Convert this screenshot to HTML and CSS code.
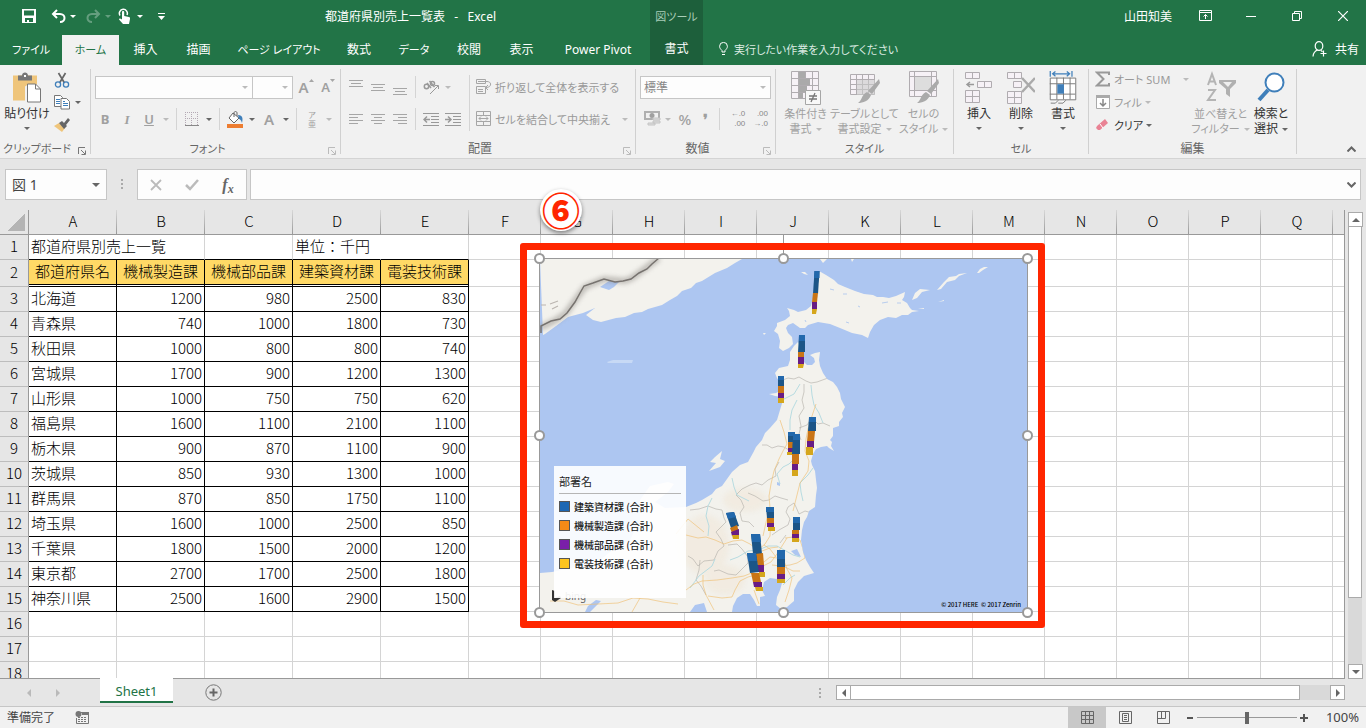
FILE: index.html
```html
<!DOCTYPE html>
<html lang="ja">
<head>
<meta charset="utf-8">
<title>都道府県別売上一覧表 - Excel</title>
<link rel="stylesheet" href="styles.css">
</head>
<body>
<header class="top">
  <div class="titlebar">
    <div class="quick">
      <button class="q" aria-label="上書き保存"><svg width="14" height="14" viewBox="0 0 14 14"><path fill="#fff" fill-rule="evenodd" d="M0 0h14v14H0zM2 1.500v5h10v-5zM3 9v4h2v-2h2v2h4V9z"/></svg></button>
      <button class="q undo" aria-label="元に戻す"><svg width="15" height="14" viewBox="0 0 15 14"><path fill="none" stroke="#fff" stroke-width="2" d="M6 1L2 5l4 4M2 5h7c6 0 6 8 0 8"/></svg></button>
      <span class="caret light"></span>
      <button class="q redo faded" aria-label="やり直し"><svg width="15" height="14" viewBox="0 0 15 14"><path fill="none" stroke="#fff" stroke-width="2" d="M9 1l4 4-4 4M13 5H6c-6 0-6 8 0 8"/></svg></button>
      <span class="caret light faded"></span>
      <button class="q touch" aria-label="タッチ/マウス モードの切り替え"><svg width="13" height="17" viewBox="0 0 13 17"><path fill="none" stroke="#fff" stroke-width="1.500" d="M2 7.500A4 4 0 1 1 9 7"/><path fill="#fff" d="M4 4c0-1.300 2.200-1.300 2.200 0v4l4.800 1c1 .3 1.200 1 1 2l-1 5H5L1 11.500c0-1 1-1.500 3 0z"/></svg></button>
      <span class="caret light"></span>
      <button class="q custom" aria-label="クイック アクセス ツール バーのユーザー設定"><svg width="7" height="7" viewBox="0 0 7 7"><path fill="#fff" d="M0 0h7v1H0zM0 3h7L3.500 7z"/></svg></button>
    </div>
    <h1>都道府県別売上一覧表&nbsp;&nbsp; -&nbsp;&nbsp; Excel</h1>
  </div>
  <nav class="tabs">
    <button class="kana">ファイル</button><button class="active kana">ホーム</button><button>挿入</button><button>描画</button><button class="kana">ページ レイアウト</button><button>数式</button><button class="kana">データ</button><button>校閲</button><button>表示</button><button>Power Pivot</button>
  </nav>
  <div class="context"><span class="kana">図ツール</span><button>書式</button></div>
  <div class="account">
    <span class="user">山田知美</span>
    <button class="win" aria-label="リボンの表示オプション"><svg width="13" height="12" viewBox="0 0 13 12"><path fill="none" stroke="#fff" d="M.5.5h12v10H.5zM.5 2.500h12M6.500 9V4.500M4.500 6.500l2-2 2 2"/></svg></button>
    <button class="win" aria-label="最小化"><svg width="10" height="10" viewBox="0 0 10 10"><path stroke="#fff" d="M0 5.500h10"/></svg></button>
    <button class="win" aria-label="元に戻す (縮小)"><svg width="10" height="10" viewBox="0 0 10 10"><path fill="none" stroke="#fff" d="M.5 2.500h7v7h-7zM2.500 2V.5h7v7H8"/></svg></button>
    <button class="win" aria-label="閉じる"><svg width="10" height="10" viewBox="0 0 10 10"><path stroke="#fff" stroke-width="1.200" d="M0 0l10 10M10 0L0 10"/></svg></button>
  </div>
  <div class="ask">
    <label><svg width="9" height="14" viewBox="0 0 9 14"><path fill="none" stroke="#fff" d="M3 10V8.500C1.500 7 .6 6 .6 4.300a3.900 3.900 0 0 1 7.800 0C8.400 6 7.500 7 6 8.500V10zM3 12.500h3"/></svg><input class="kana" aria-label="操作アシスト" placeholder="実行したい作業を入力してください"></label>
    <button class="share"><svg width="15" height="16" viewBox="0 0 15 16"><g fill="none" stroke="#fff" stroke-width="1.200"><ellipse cx="7" cy="5" rx="3.800" ry="4.400"/><path d="M1 15.500c.3-4 2-5.500 4.500-6.500M9 9.500l1.500 1.200M11.500 9.500v6M8.500 12.500h6"/></g></svg>共有</button>
  </div>
</header>

<section class="ribbon">
  <div class="group clip">
    <div class="body">
      <button class="big paste"><svg width="28" height="31" viewBox="0 0 28 31"><path fill="#efc57b" d="M0 3h24v9h-9l-3 2v14H0z"/><path fill="#777" d="M5 3h4c0-4 6-4 6 0h4v5H5z"/><path fill="#fff" d="M11 2.500h2v2h-2z"/><path fill="#fff" stroke="#777" d="M14.500 11.500h8l5 5v13h-13z"/><path fill="none" stroke="#777" d="M22.500 11.500v5h5"/></svg><span>貼り付け</span><i class="caret"></i></button>
      <div class="mini">
        <button class="cut" aria-label="切り取り"><svg width="16" height="16" viewBox="0 0 16 16"><path stroke="#666" stroke-width="1.700" d="M4.500 1l6 10M11.500 1l-6 10"/><g fill="none" stroke="#3f7fba" stroke-width="1.300"><circle cx="4" cy="12.500" r="2.600"/><circle cx="12" cy="12.500" r="2.600"/></g></svg></button>
        <button class="copy" aria-label="コピー"><svg width="16" height="15" viewBox="0 0 16 15"><g fill="#fff" stroke="#777"><path d="M.5.5h6l2 2v9h-8z"/><path d="M7 3.500h5.500l3 3v7.500H7z"/></g><path stroke="#3f7fba" d="M2 4.500h4M2 6.500h4M2 8.500h4M9 8.500h5M9 10.500h5M9 6.500h2"/></svg></button><i class="caret"></i>
        <button class="brush" aria-label="書式のコピー/貼り付け"><svg width="16" height="14" viewBox="0 0 16 14"><path fill="#efc57b" d="M0 8l5-3 6 5-3 4z"/><path fill="#666" d="M5 5l3-2 2 2 4-5 2 2-4 5 1 1-3 3z"/></svg></button>
      </div>
    </div>
    <footer class="kana"><span>クリップボード</span><svg class="launch on" width="8" height="8" viewBox="0 0 8 8"><path d="M.5 7V.5H7M3 3l4 4M7.500 3.500v4h-4"/></svg></footer>
  </div>

  <div class="group font">
    <div class="body rows">
      <div class="row">
        <span class="combo face"><select aria-label="フォント"><option></option></select></span><span class="combo size"><select aria-label="フォント サイズ"><option></option></select></span>
        <button class="grow b22">A<svg width="5" height="3" viewBox="0 0 5 3"><path fill="#a6a6a6" d="M0 3L2.500 0 5 3z"/></svg></button><button class="shrink b22">A<svg width="5" height="3" viewBox="0 0 5 3"><path fill="#a6a6a6" d="M0 0h5L2.500 3z"/></svg></button>
      </div>
      <div class="row">
        <button class="b22"><b>B</b></button><button class="b22"><em>I</em></button><button class="b22"><u>U</u></button><span class="c12"><i class="caret dim"></i></span><span class="bar"></span>
        <button class="b22" aria-label="罫線"><svg width="14" height="14" viewBox="0 0 14 14"><path fill="none" stroke="#b4a9b4" stroke-dasharray="1 1" d="M.5 0v13M6.500 0v13M12.500 0v13M0 .5h13M0 6.500h13"/><path stroke="#888" d="M0 13.500h14"/></svg></button><span class="c12"><i class="caret"></i></span><span class="bar"></span>
        <button class="b22" aria-label="塗りつぶしの色"><svg width="17" height="17" viewBox="0 0 17 17"><path fill="#fff" stroke="#666" d="M6 2l6 5-5 5-5-5z"/><path fill="none" stroke="#666" d="M7 6V2c0-2 3-2 3 0v3"/><path fill="#3f7fba" d="M11 4c5 0 5 4 4 8-1-3-2-4-3-4z"/><path fill="#ed7d31" d="M0 13h16v4H0z"/></svg></button><span class="c12"><i class="caret"></i></span>
        <button class="b22"><strong>A</strong></button><span class="c12"><i class="caret"></i></span><span class="bar"></span>
        <button class="b22 ruby"><span>ア</span><span>亜</span></button><span class="c12"><i class="caret dim"></i></span>
      </div>
    </div>
    <footer class="kana"><span>フォント</span><svg class="launch" width="8" height="8" viewBox="0 0 8 8"><path d="M.5 7V.5H7M3 3l4 4M7.500 3.500v4h-4"/></svg></footer>
  </div>

  <div class="group align">
    <div class="body">
      <div class="rows">
        <div class="row">
          <button class="b22" aria-label="上揃え"><svg width="14" height="20" viewBox="0 0 14 20"><path stroke="#a6a6a6" d="M0 3.500h14M2 6.500h10M0 9.500h14"/></svg></button><button class="b22" aria-label="上下中央揃え"><svg width="14" height="20" viewBox="0 0 14 20"><path stroke="#a6a6a6" d="M0 7.500h14M2 10.500h10M0 13.500h14"/></svg></button><button class="b22" aria-label="下揃え"><svg width="14" height="20" viewBox="0 0 14 20"><path stroke="#a6a6a6" d="M0 11.500h14M2 14.500h10M0 17.500h14"/></svg></button><span class="bar"></span>
          <button class="b22" aria-label="方向"><svg width="17" height="15" viewBox="0 0 17 15"><g fill="none" stroke="#999" stroke-width="1.500"><circle cx="3.500" cy="6.500" r="2.200"/><path d="M4 3l4 5M6.500 1l5 6"/><circle cx="9.500" cy="3.500" r="2"/></g><path fill="none" stroke="#999" d="M7 14l8-8M12 5.500h3.500V9"/></svg></button><span class="c12"><i class="caret dim"></i></span>
        </div>
        <div class="row">
          <button class="b22" aria-label="左揃え"><svg width="14" height="13" viewBox="0 0 14 13"><path stroke="#a6a6a6" d="M0 1.500h14M0 4.500h9M0 7.500h14M0 10.500h9"/></svg></button><button class="b22" aria-label="中央揃え"><svg width="14" height="13" viewBox="0 0 14 13"><path stroke="#a6a6a6" d="M0 1.500h14M3 4.500h8M0 7.500h14M3 10.500h8"/></svg></button><button class="b22" aria-label="右揃え"><svg width="14" height="13" viewBox="0 0 14 13"><path stroke="#a6a6a6" d="M0 1.500h14M5 4.500h9M0 7.500h14M5 10.500h9"/></svg></button><span class="bar"></span>
          <button class="b22" aria-label="インデントを減らす"><svg width="16" height="13" viewBox="0 0 16 13"><path stroke="#999" d="M0 .5h16M8 3.500h8M8 6.500h8M8 9.500h8M0 12.500h16"/><path fill="none" stroke="#999" stroke-width="1.500" d="M7 6.500H1M4 3.500l-3 3 3 3"/></svg></button><button class="b22" aria-label="インデントを増やす"><svg width="16" height="13" viewBox="0 0 16 13"><path stroke="#999" d="M0 .5h16M8 3.500h8M8 6.500h8M8 9.500h8M0 12.500h16"/><path fill="none" stroke="#999" stroke-width="1.500" d="M0 6.500h6M3 3.500l3 3-3 3"/></svg></button>
        </div>
      </div>
      <span class="bar tall"></span>
      <div class="rows wide">
        <div class="row"><button class="text kana"><svg width="16" height="16" viewBox="0 0 16 16"><path fill="none" stroke="#a6a6a6" d="M.5.500h9v4h-9zM.5 7.500h9v7h-9zM2 10.500h5M2 12.500h5M2 2.500h9c5 0 5 6-1 6M12 6l-2.500 2.500L12 11"/></svg>折り返して全体を表示する</button></div>
        <div class="row"><button class="text kana"><svg width="16" height="16" viewBox="0 0 16 16"><path fill="none" stroke="#a6a6a6" d="M.5.500h14v14H.5zM.5 4.500h14M.5 10.500h14M7.500.500v4M7.500 10.500v4M3 7.500h9M5 5.500l-2 2 2 2M10 5.500l2 2-2 2"/></svg>セルを結合して中央揃え</button><i class="caret dim end"></i></div>
      </div>
    </div>
    <footer><span>配置</span><svg class="launch" width="8" height="8" viewBox="0 0 8 8"><path d="M.5 7V.5H7M3 3l4 4M7.500 3.500v4h-4"/></svg></footer>
  </div>

  <div class="group number">
    <div class="body rows">
      <div class="row"><span class="combo fill"><select aria-label="表示形式"><option>標準</option></select></span></div>
      <div class="row">
        <button class="b24" aria-label="通貨表示形式"><svg width="17" height="16" viewBox="0 0 17 16"><path fill="#b0b0b0" fill-rule="evenodd" d="M0 0h16v9H0zM2 2v5h12V2z"/><circle cx="8" cy="4.500" r="2.500" fill="#a0a0a0"/><path fill="#ddd" stroke="#c4c4c4" d="M9 7h7v2H9zM9 10h7v2H9zM4 12h7v2H4z"/></svg></button><span class="c8"><i class="caret dim"></i></span><button class="b26 pct">%</button><button class="comma">❜</button><span class="bar"></span>
        <button class="dec" aria-label="小数点以下の表示桁数を増やす"><span>←.0</span><span>.00</span></button><button class="dec" aria-label="小数点以下の表示桁数を減らす"><span>.00</span><span>→.0</span></button>
      </div>
    </div>
    <footer><span>数値</span><svg class="launch" width="8" height="8" viewBox="0 0 8 8"><path d="M.5 7V.5H7M3 3l4 4M7.500 3.500v4h-4"/></svg></footer>
  </div>

  <div class="group styles">
    <div class="body">
      <button class="big off kana"><svg width="30" height="34" viewBox="0 0 30 34"><path fill="#f6f1f6" stroke="#b0acb0" d="M.5.500h27v27H.5zM7.500 0v28M14.500 0v28M21.500 0v28M0 7.500h28M0 14.500h28M0 21.500h28"/><path fill="#aaa" d="M8 1h6v6H8zM8 8h11v6H8zM8 15h8v6H8zM8 22h4v5H8z"/><path fill="#f8f8f8" stroke="#a6a6a6" d="M14.500 19.500h15v14h-15z"/><path stroke="#777" stroke-width="1.300" d="M18 25h8M18 28h8M24 22l-4 9"/></svg><span>条件付き<br>書式<i class="caret dim"></i></span></button>
      <button class="big off kana"><svg width="30" height="34" viewBox="0 0 30 34"><path fill="#f6f1f6" stroke="#b0acb0" d="M.5 3.500h24v20H.5zM6.500 3v20M12.500 3v20M18.500 3v20M0 8.500h24M0 13.500h24M0 18.500h24"/><path fill="#ccc" opacity=".6" d="M7 9h18v15H7z"/><path fill="#aaa" d="M29 8l1 4-8 11-4-3zM17 21l4 3c-2 6-8 8-13 8 4-2 3-8 9-11z"/></svg><span>テーブルとして<br>書式設定<i class="caret dim"></i></span></button>
      <button class="big off kana"><svg width="30" height="34" viewBox="0 0 30 34"><path fill="#f6f1f6" stroke="#b0acb0" d="M.5.500h27v25H.5zM5.500 0v25M22.500 0v25M0 5.500h28M0 19.500h28"/><path fill="#ddd" d="M6 6h16v13H6z"/><path fill="#aaa" d="M29 8l1 4-8 11-4-3zM17 21l4 3c-2 6-8 8-13 8 4-2 3-8 9-11z"/></svg><span>セルの<br>スタイル<i class="caret dim"></i></span></button>
    </div>
    <footer class="kana"><span>スタイル</span></footer>
  </div>

  <div class="group cellsg">
    <div class="body">
      <button class="big"><svg width="28" height="34" viewBox="0 0 28 34"><path fill="#f6f1f6" stroke="#b0acb0" d="M.5 1.500h14v6H.5zM7.500 1v6M.5 19.500h14v12H.5zM7.500 19v12M0 25.500h15M12.500 10.500h14v6h-14zM19.500 10v6"/><path fill="none" stroke="#999" stroke-width="1.500" d="M9 13.500H2M5 11l-3 2.500L5 16"/></svg><span>挿入</span><i class="caret"></i></button>
      <button class="big"><svg width="28" height="34" viewBox="0 0 28 34"><path fill="#f6f1f6" stroke="#b0acb0" d="M.5 1.500h14v6H.5zM7.500 1v6M.5 20.500h14v12H.5zM7.500 20v12M0 26.500h15M6.500 10.500h8v6h-8z"/><path fill="none" stroke="#aaa" stroke-width="2.500" d="M15 7l13 14M28 7L15 21"/></svg><span>削除</span><i class="caret"></i></button>
      <button class="big"><svg width="28" height="36" viewBox="0 0 28 36"><path fill="none" stroke="#3f7fba" stroke-width="1.300" d="M.5 0v6M23.500 0v6M3 3h18M6 .5L3 3l3 2.500M18 .5L21 3l-3 2.500"/><path fill="#fff" stroke="#777" d="M.5 7.500h27v23H.5zM7.500 7v23M14.500 7v23M21.500 7v23M0 13.500h27M0 24.500h27M1 34h5l3-3M9 34h5l3-3"/><path fill="#3f7fba" d="M8 14h7v10H8z"/></svg><span>書式</span><i class="caret"></i></button>
    </div>
    <footer class="kana"><span>セル</span></footer>
  </div>

  <div class="group edit">
    <div class="body">
      <div class="list">
        <button class="text kana"><svg width="16" height="16" viewBox="0 0 16 16"><path fill="none" stroke="#999" stroke-width="2" d="M14 4V1.500H2L8.500 8 2 14.500h12V12"/></svg>オート SUM<i class="caret dim far"></i></button>
        <button class="text kana"><svg width="16" height="16" viewBox="0 0 16 16"><path fill="#fff" stroke="#aaa" d="M1.500 1.500h13v13h-13z"/><path fill="#aaa" d="M1 1h14v3H1z"/><path fill="none" stroke="#888" stroke-width="1.500" d="M8 5v7M5 9l3 3 3-3"/></svg>フィル<i class="caret dim"></i></button>
        <button class="text kana on"><svg width="16" height="16" viewBox="0 0 16 16"><path fill="#e98294" d="M2 9l8-7 3 4-8 7H3l-2-2z"/><path stroke="#fff" d="M5 7l3 4"/></svg>クリア<i class="caret"></i></button>
      </div>
      <button class="big off kana sort"><svg width="30" height="34" viewBox="0 0 30 34"><g fill="none" stroke="#b4b4b4" stroke-width="2"><path d="M2 14L6 3l4 11M3 10.500h6M2 19h7L2 29h8"/></g><path fill="#b0b0b0" d="M13 9h17v3l-6 6v8l-4-3v-5l-7-6z"/><path fill="#eee" d="M17 11h9l-4 5z"/></svg><span>並べ替えと<br>フィルター<i class="caret dim"></i></span></button>
      <button class="big find"><svg width="28" height="34" viewBox="0 0 28 34"><circle cx="17.500" cy="11.500" r="9" fill="#fff" stroke="#3f7fba" stroke-width="2"/><path stroke="#3f7fba" stroke-width="4" d="M11 19L2 29"/></svg><span>検索と<br>選択<i class="caret"></i></span></button>
    </div>
    <footer><span>編集</span></footer>
  </div>
  <button class="collapse" aria-label="リボンを折りたたむ"><svg width="9" height="6" viewBox="0 0 9 6"><path fill="none" stroke="#666" stroke-width="2" d="M.5 5.500l4-4 4 4"/></svg></button>
</section>

<section class="formula">
  <div class="namebox"><input aria-label="名前ボックス" value="図 1"><i class="caret"></i></div>
  <span class="dots"></span>
  <div class="fx">
    <button aria-label="キャンセル"><svg width="12" height="12" viewBox="0 0 12 12"><path stroke="#bbb" stroke-width="1.800" d="M1 1l10 10M11 1L1 11"/></svg></button>
    <button aria-label="入力"><svg width="14" height="12" viewBox="0 0 14 12"><path fill="none" stroke="#bbb" stroke-width="2.500" d="M1 6l4 4 8-9"/></svg></button>
    <button class="fn"><i>f</i><sub>x</sub></button>
  </div>
  <div class="entry"><input aria-label="数式バー"><svg width="9" height="6" viewBox="0 0 9 6"><path fill="none" stroke="#666" stroke-width="2" d="M.5.5l4 4 4-4"/></svg></div>
</section>

<main class="sheet">
  <div class="cells">
    <table>
      <colgroup><col class="rh"><col class="data" span="5"><col class="std" span="12"><col></colgroup>
      <thead><tr><th class="corner"></th><th>A</th><th>B</th><th>C</th><th>D</th><th>E</th><th>F</th><th>G</th><th>H</th><th>I</th><th>J</th><th>K</th><th>L</th><th>M</th><th>N</th><th>O</th><th>P</th><th>Q</th><th></th></tr></thead>
      <tbody>
        <tr class="caption"><th>1</th><td colspan="2">都道府県別売上一覧</td><td></td><td class="open">単位：千円</td><td></td><td class="rest" colspan="13"></td></tr>
        <tr class="heads"><th>2</th><td>都道府県名</td><td>機械製造課</td><td>機械部品課</td><td>建築資材課</td><td>電装技術課</td><td class="rest" colspan="13"></td></tr>
        <tr class="rec"><th>3</th><td>北海道</td><td>1200</td><td>980</td><td>2500</td><td>830</td><td class="rest" colspan="13"></td></tr>
        <tr class="rec"><th>4</th><td>青森県</td><td>740</td><td>1000</td><td>1800</td><td>730</td><td class="rest" colspan="13"></td></tr>
        <tr class="rec"><th>5</th><td>秋田県</td><td>1000</td><td>800</td><td>800</td><td>740</td><td class="rest" colspan="13"></td></tr>
        <tr class="rec"><th>6</th><td>宮城県</td><td>1700</td><td>900</td><td>1200</td><td>1300</td><td class="rest" colspan="13"></td></tr>
        <tr class="rec"><th>7</th><td>山形県</td><td>1000</td><td>750</td><td>750</td><td>620</td><td class="rest" colspan="13"></td></tr>
        <tr class="rec"><th>8</th><td>福島県</td><td>1600</td><td>1100</td><td>2100</td><td>1100</td><td class="rest" colspan="13"></td></tr>
        <tr class="rec"><th>9</th><td>栃木県</td><td>900</td><td>870</td><td>1100</td><td>900</td><td class="rest" colspan="13"></td></tr>
        <tr class="rec"><th>10</th><td>茨城県</td><td>850</td><td>930</td><td>1300</td><td>1000</td><td class="rest" colspan="13"></td></tr>
        <tr class="rec"><th>11</th><td>群馬県</td><td>870</td><td>850</td><td>1750</td><td>1100</td><td class="rest" colspan="13"></td></tr>
        <tr class="rec"><th>12</th><td>埼玉県</td><td>1600</td><td>1000</td><td>2500</td><td>850</td><td class="rest" colspan="13"></td></tr>
        <tr class="rec"><th>13</th><td>千葉県</td><td>1800</td><td>1500</td><td>2000</td><td>1200</td><td class="rest" colspan="13"></td></tr>
        <tr class="rec"><th>14</th><td>東京都</td><td>2700</td><td>1700</td><td>2500</td><td>1800</td><td class="rest" colspan="13"></td></tr>
        <tr class="rec"><th>15</th><td>神奈川県</td><td>2500</td><td>1600</td><td>2900</td><td>1500</td><td class="rest" colspan="13"></td></tr>
        <tr><th>16</th><td></td><td></td><td></td><td></td><td></td><td class="rest" colspan="13"></td></tr>
        <tr><th>17</th><td></td><td></td><td></td><td></td><td></td><td class="rest" colspan="13"></td></tr>
        <tr><th>18</th><td></td><td></td><td></td><td></td><td></td><td class="rest" colspan="13"></td></tr>
      </tbody>
    </table>
  </div>
  <div class="vscroll"><button aria-label="上へスクロール"><i class="up"></i></button><div class="vthumb"></div><div class="gap"></div><button aria-label="下へスクロール"><i class="down"></i></button></div>

  <span class="stem"></span>
  <figure class="map">
    <svg class="art" viewBox="540 259 487 353" preserveAspectRatio="none">
      <defs>
        <filter id="soft"><feGaussianBlur stdDeviation="2.500"/></filter>
        <filter id="slight"><feGaussianBlur stdDeviation=".5"/></filter>
        <path id="honshu" d="M775 373L779 368 788 366 790 360 790 352 794 346 798 342 801 345 802 352 804 362 807 365 812 365 815 362 814 358 810 355 815 353 820 352 819 360 820 366 823 373 827 379 833 382 837 387 840 393 841 399 845 407 842 413 843 417 839 422 839 426 833 428 833 436 830 440 832 442 831 446 834 451 829 448 827 446 821 447 816 449 813 454 811 461 812 465 815 471 816 480 817 488 816 495 815 507 809 511 807 517 804 522 802 530 801 540 803 552 806 560 810 567 814 573 804 576 798 582 794 590 794 601 787 607 781 609 776 605 777 597 780 590 782 583 777 579 770 578 764 582 762 590 765 596 760 597 760 606 757 606 754 600 750 594 743 594 737 598 733 606 732 612 540 612 540 573 552 572 580 566 600 560 615 548 630 540 640 520 640 500 650 486 668 482 674 484 668 492 655 502 665 508 686 507 696 503 702 500 712 494 716 489 722 486 727 479 732 472 740 465 748 462 753 453 756 447 762 440 765 433 770 428 777 420 780 410 783 400 782 397 775 396 769 394 776 393 780 391 781 384 777 378z"/>
        <clipPath id="land"><use href="#honshu"/></clipPath>
      </defs>
      <path fill="#adc6f1" d="M540 259h487v353H540z"/>
      <path fill="#f3f2ed" d="M540 259h202l-7 4-8 5-12 5-13 8-6 2-5 5-9 3-5 5-7 4-8 5-14 4-6 3-8 1-9 4-9 1-15 4-8-2-7-5 9-7-12 5-15 4-12 9-11 8-2 1z"/>
      <path fill="#adc6f1" d="M600 287l9-6 10 1-5 5-5 3z"/>
      <path filter="url(#soft)" fill="none" stroke="#8d8984" stroke-width="5" opacity=".6" d="M659 258l-16 12-11 8-7 3-21-2-19 8-9 12-10 14-10 7-16 8"/>
      <path filter="url(#slight)" fill="none" stroke="#77736f" stroke-width="1.500" d="M659 258l-7 6-5 5-8 4-8 6-8 2-8 1-11-3-11 4-9 3-4 7-5 9-8 11-7 6-9 2-10 5v7"/>
      <path filter="url(#slight)" fill="none" stroke="#bbb6b0" stroke-width="1.200" d="M550 304l8-3M552 309l6-3M541 305h5"/>
      <path filter="url(#slight)" fill="#c7d9f5" d="M607 362l6-2h20l-1 3h-24z"/>
      <path fill="#f3f2ed" d="M819 271L826 275 834 280 838 284 845 287 855 291 864 294 873 295 877 297 883 297 889 298 896 296 905 292 904 297 902 300 907 303 910 308 912 310 919 311 912 312 908 315 902 315 896 318 888 317 880 320 874 325 870 332 868 338 862 335 852 333 840 328 830 324 818 322 808 325 805 328 800 328 793 323 788 325 786 328 788 333 792 337 793 344 789 348 783 351 779 348 780 341 778 334 774 331 777 326 777 323 785 320 790 316 789 311 787 308 794 310 798 312 806 310 811 306z"/>
      <g fill="#f3f2ed"><path d="M820 259l3 4 4-4zM851 259l1 3 2-3zM937 290l7-8 5-5 7-1 3-2 8-1-8 3-4 4-8 2-6 7zM977 273l3-4 4-2 4 0-5 3-4 3zM912 300l3-7 5-4 10 1-8 2-5 6zM938 302l6-2v1zM918 309l6-1v1zM801 272l3 2 4 1-3-3zM763 333l3 0-2 2z"/>
      <path d="M722 451l-7 6-5 5 6 1-7 8 11-4 5-6-5-2z"/></g>
      <path fill="none" stroke="#b8cdee" stroke-width="1" d="M830 289l4 1M843 294l4 0M805 320l1 2M846 322l3 1M882 303l6-1M858 306l2 1M897 303l4 0"/>
      <use href="#honshu" fill="#f3f2ed"/>
      <g clip-path="url(#land)" fill="none">
        <g filter="url(#soft)" fill="#f0e6d8" opacity=".55"><ellipse cx="705" cy="545" rx="24" ry="30"/><ellipse cx="745" cy="500" rx="22" ry="12"/><ellipse cx="725" cy="580" rx="20" ry="15"/></g>
        <path fill="#adc6f1" d="M777 482l3 1v3l-3-1zM791 551l6-2 4 8-6-2zM690 612l5-7 9-2 3 9zM585 612l3-6 8-6 5 1-11 11z"/>
        <g stroke="#b4b1aa" stroke-width=".8" opacity=".8"><path d="M780 381l8-3 6 1 5-2 7 4 5 2 6-1 11-4M804 384l0 8-2 8 2 8-5 8 2 10-2 8 2 6M762 445l5 0 5 3 6-2 6 1 8 5M799 428l8-3 5-7 6 6 5-1 7 3M779 462l-4 7 1 7-8 4-6 5-6-2-6 2-8 4-6 6 5 5 3 7-4 6 2 8 7 1 5 5M788 500l-7-2-6-2-6 4-6 1-8-5-7-3M812 513l-7-2-6 3-3-7-2-4-6 4-2 5 4 7-2 6-9 5-7 5M690 510l9-1 9-3 8 3 6 1 2 8 2 4-5 5-5 5 5 7 3 7-6 5-4 9-10 1-6 5-5-7-5-3M728 545l9-1 5 5 6 8 0 6-6 6-6 6-8-1-9-4-5 1M700 560l-1 10-3 10 5 6 5 9M786 535l-6 8"/></g>
        <g stroke="#b7dbe0" stroke-width="1"><path d="M782 400l6-3 6-3 6-10M797 400l-5 10-2 10 0 10M811 385l1 10 2 10 5 8 4 10M798 450l-4 9-5 5-6 3-6 7 3 10M813 468l-5 7-8 8 1 9 2 9M732 478l2 9 3 8 6 3 6 3M712 498l-4 8-2 10 3 10-1 10M730 560l8-3 10-6 10-1 10-4 9 0 9 5 7 4 7 2M690 588l9-12 13-10 3-7M795 575l-5 3-7 7"/></g>
        <g stroke="#f0be70" stroke-width=".8" opacity=".8"><path d="M780 420l4 12 3 12-4 7-4 8-5 12-3 13-2 12 1 12-3 10-4 18M816 404l-4 12-4 13-2 10-1 12 4 10-1 10-8 12-4 16-3 12M785 538l8-1 7 3 3 9 2 9-8 5-7 2-9 1-9-1M686 590l8-6 8-3 15-1 15-2 12-2 10-4 9-6 8-4 6-8 10-16M686 535l12 3 8-1 9 3 9 4 9-3 9-1 8 4 8 6 7-6 5-8 1-20M704 532l-16-13-12 15M703 575l0 10 3 10 8 15M757 565l7-3 6-5 7 1 7 3 3 8 5 9-3 12-4 12M756 575l-8 2-8 4-5 9-3 7-10 1-14-2M754 590l5 14M550 601l14 0 14 4 20-1 20-1 15-5 15 1 15 3 15 2M632 612l8-14M764 545l6 4 6 8M762 551l8-3 8-1M785 567l8 4 7 0"/></g>
      </g>
      <g filter="url(#slight)" class="marks">
        <path fill="#1b5587" d="M814.500 271h5l-1.500 23h-5z"/><path fill="#c97414" d="M813 293h5l-1 9h-5z"/><path fill="#671b85" d="M812 302h5v7h-5z"/><path fill="#d5a61f" d="M812 309h5l-1 5h-4z"/>
        <path fill="#1b5587" d="M799 335h6v17h-7z"/><path fill="#c97414" d="M798 352h6v6h-6z"/><path fill="#671b85" d="M798 357h6v7h-6z"/><path fill="#d5a61f" d="M798 364h6l-1 4h-5z"/>
        <path fill="#1b5587" d="M778 376h6v10h-6z"/><path fill="#c97414" d="M778 386h6v7h-6z"/><path fill="#671b85" d="M778 393h6v5h-6z"/><path fill="#d5a61f" d="M778 398h6v5h-6z"/>
        <path fill="#1b5587" d="M809 417h7v14h-8z"/><path fill="#c97414" d="M808 431h7l-1 11h-7z"/><path fill="#671b85" d="M807 441h7v7h-7z"/><path fill="#d5a61f" d="M806 447h7v8h-7z"/>
        <path fill="#1b5587" d="M788 432h7v11h-7z"/><path fill="#c97414" d="M788 442h6v7h-6z"/><path fill="#671b85" d="M788 448h5v5h-5z"/><path fill="#d5a61f" d="M787 452h6v3h-6z"/>
        <path fill="#1b5587" d="M793 434h7v20h-8z"/><path fill="#c97414" d="M792 454h7v10h-7z"/><path fill="#671b85" d="M792 464h6v7h-6z"/><path fill="#d5a61f" d="M792 470h6v6h-6z"/>
        <path fill="#1b5587" d="M793 517h7v13h-7z"/><path fill="#c97414" d="M792 530h7v5h-7z"/><path fill="#671b85" d="M792 534h7v5h-7z"/><path fill="#d5a61f" d="M792 538h7v4h-7z"/>
        <path fill="#1b5587" d="M726 513l8-1 5 14-8 2z"/><path fill="#c97414" d="M730 528l7-3 2 7-7 1z"/><path fill="#671b85" d="M731 532l8-3v6l-7 1z"/><path fill="#d5a61f" d="M732 535h7v4h-6z"/>
        <path fill="#1b5587" d="M766 507h8v11h-7z"/><path fill="#c97414" d="M767 518h7v6h-7z"/><path fill="#671b85" d="M767 523h7v4h-7z"/><path fill="#d5a61f" d="M768 527h7v4h-7z"/>
        <path fill="#1b5587" d="M751 534h9l2 20h-9z"/><path fill="#c97414" d="M755 554l8-1 1 12-6 1z"/><path fill="#671b85" d="M757 565h7v7h-6z"/><path fill="#d5a61f" d="M759 572h6v5h-6z"/>
        <path fill="#1b5587" d="M747 553h9l3 19-9 1z"/><path fill="#c97414" d="M751 573h8l2 9h-8z"/><path fill="#671b85" d="M753 582h9v5h-8z"/><path fill="#d5a61f" d="M755 587h8v4h-7z"/>
        <path fill="#1b5587" d="M777 550h8v17h-8z"/><path fill="#c97414" d="M777 567h8v7h-8z"/><path fill="#671b85" d="M777 574h8v6h-8z"/><path fill="#d5a61f" d="M777 579h8v4h-8z"/>
        <path fill="#2067ac" d="M814.500 271h5v7h-5.500zM799 335h6v6h-6zM778 376h6v4h-6zM809 417h7v5h-7zM788 432h7v4h-7zM793 434h7v6h-7zM793 517h7v6h-7zM726 513l8-1 2 5-8 2zM766 507h8v5h-8zM751 534h9l1 8h-9zM747 553h9l1 8h-9zM777 550h8v9h-8z"/>
      </g>
      <path fill="#333" d="M552 590l3 1v7l5-2 1 2-6 4-3-2z"/>
    </svg>
    <span class="bing">bing</span>
    <div class="legend">
      <h2>部署名</h2>
      <ul><li><i class="blue"></i>建築資材課 (合計)</li><li><i class="orange"></i>機械製造課 (合計)</li><li><i class="purple"></i>機械部品課 (合計)</li><li><i class="yellow"></i>電装技術課 (合計)</li></ul>
    </div>
    <figcaption>© 2017 HERE &nbsp;© 2017 Zenrin</figcaption>
    <div class="handles"><i></i><i></i><i></i><i></i><i class="none"></i><i></i><i></i><i></i><i></i></div>
  </figure>
  <div class="frame"></div>
  <div class="badge">⑥</div>
</main>

<section class="sheetbar">
  <div class="nav"><button aria-label="前のシート"><i class="left"></i></button><button aria-label="次のシート"><i class="right"></i></button></div>
  <button class="sheettab">Sheet1</button>
  <button class="add" aria-label="新しいシート"><svg width="17" height="17" viewBox="0 0 17 17"><circle cx="8.500" cy="8.500" r="7.700" fill="none" stroke="#777"/><path stroke="#666" stroke-width="2" d="M4.500 8.500h8M8.500 4.500v8"/></svg></button>
  <span class="dots"></span>
  <div class="hscroll"><button aria-label="左へスクロール"><i class="left"></i></button><div class="hthumb"></div><div class="gap"></div><button aria-label="右へスクロール"><i class="right"></i></button></div>
</section>

<footer class="status">
  <span>準備完了</span>
  <svg class="macro" width="14" height="13" viewBox="0 0 14 13"><circle cx="3.500" cy="3" r="3" fill="#777"/><path fill="none" stroke="#777" d="M6 1.500h7.500v11H1.500V7"/><path fill="#777" d="M7 1h7v3H7z"/><path stroke="#777" stroke-dasharray="2 1" d="M3 6.500h9M3 8.500h9M3 10.500h9"/></svg>
  <div class="views">
    <button class="sel" aria-label="標準"><svg width="13" height="14" viewBox="0 0 13 14"><path fill="none" stroke="#666" d="M.5.5h12v12H.5zM4.500 0v13M8.500 0v13M0 4.500h13M0 8.500h13"/></svg></button>
    <button aria-label="ページ レイアウト"><svg width="13" height="14" viewBox="0 0 13 14"><path fill="none" stroke="#666" d="M.5.5h12v12H.5zM3.500 2.500h6v8h-6zM5 4.500h3M5 6.500h3M5 8.500h3"/></svg></button>
    <button aria-label="改ページ プレビュー"><svg width="13" height="14" viewBox="0 0 13 14"><path fill="none" stroke="#666" d="M.5.5h12v12H.5zM.5 7.500h8v-7M4.500.5v7"/></svg></button>
  </div>
  <button class="zoom" aria-label="縮小"><svg width="6" height="8" viewBox="0 0 6 8"><path fill="#555" d="M0 3h6v2H0z"/></svg></button>
  <input type="range" min="0" max="200" value="100" aria-label="ズーム">
  <button class="zoom" aria-label="拡大"><svg width="8" height="8" viewBox="0 0 8 8"><path fill="#555" d="M0 3h3V0h2v3h3v2H5v3H3V5H0z"/></svg></button>
  <output>100%</output>
</footer>
</body>
</html>
```

FILE: styles.css
```css
* { box-sizing: border-box; }
body {
  margin: 0;
  height: 100vh;
  display: flex;
  flex-direction: column;
  overflow: hidden;
  background: #e6e6e6;
  color: #444;
  font: 12px/15px "Noto Sans", "Noto Sans CJK JP", sans-serif;
  font-feature-settings: "palt";
}
button, input, select {
  font: inherit;
  font-feature-settings: inherit;
  color: inherit;
  background: none;
  border: 0;
  padding: 0;
  margin: 0;
  outline: 0;
}
button { display: flex; align-items: center; justify-content: center; white-space: nowrap; }
svg { display: block; flex: none; }
.kana { font-size: 11px; }
.caret { flex: none; border: 3px solid transparent; border-top-color: #666; border-bottom: 0; }
.caret.dim { border-top-color: #bbb; }
.caret.light { border-top-color: #fff; }
.faded { opacity: .3; }

/* Title bar and tabs */
.top {
  display: grid;
  grid-template-columns: 650px 53px 1fr;
  grid-template-rows: 30px 35px;
  background: #227447;
  color: #fff;
}
.titlebar { display: flex; align-items: center; padding-top: 2px; }
.quick { display: flex; align-items: center; width: 325px; padding-left: 22px; }
.undo { margin: 0 4px 0 15px; }
.redo { margin: 0 4px 0 10px; }
.touch { margin: 0 6px 0 7px; }
.custom { margin-left: 15px; }
h1 { margin: 0; font-size: 12px; font-weight: 400; }
.tabs {
  grid-row: 2;
  grid-column: 1;
  display: grid;
  grid-template-columns: 62px 57px 53px 53px 108px 52px 58px 52px 53px 100px;
  padding-top: 5px;
}
.tabs button { padding-bottom: 2px; }
.tabs .active { background: #f1f1f1; color: #227447; }
.context {
  grid-column: 2;
  grid-row: 1 / 3;
  background: #1d5f3b;
  display: grid;
  grid-template-rows: 32px 33px;
  justify-items: center;
  align-items: center;
}
.context span { color: #a9cdb8; }
.account { grid-column: 3; grid-row: 1; display: flex; justify-content: flex-end; align-items: center; padding-top: 2px; }
.user { margin-right: 10px; }
.win { width: 46px; height: 28px; }
.ask { grid-column: 3; grid-row: 2; display: flex; justify-content: space-between; align-items: center; padding: 3px 7px 0 16px; }
.ask label { display: flex; align-items: center; gap: 6px; }
.ask input { width: 200px; }
.ask input::placeholder { color: #dcebe2; opacity: 1; }
.share { gap: 8px; }

/* Ribbon */
.ribbon { display: flex; height: 94px; flex: none; padding: 4px 0; background: #f1f1f1; border-bottom: 1px solid #d4d4d4; }
.group { flex: none; display: flex; flex-direction: column; justify-content: space-between; border-right: 1px solid #d0d0d0; }
.group footer { position: relative; display: flex; justify-content: center; height: 10px; color: #666; line-height: 10px; }
.launch { position: absolute; right: 4px; bottom: -1px; fill: none; stroke: #bbb; }
.launch.on { stroke: #777; }
.body { display: flex; height: 68px; }
.clip { width: 91px; }
.clip footer { padding-right: 16px; }
.font { width: 250px; }
.font .body { padding-left: 3px; }
.font footer { padding-right: 16px; }
.align { width: 295px; }
.align footer { padding-right: 16px; }
.align .body { padding-left: 4px; }
.number { width: 140px; }
.number .body { padding: 0 4px; }
.number footer { padding-right: 16px; }
.styles { width: 178px; }
.cellsg { width: 135px; }
.cellsg .body { padding-left: 4px; }
.edit { width: 208px; }
.edit .body { padding-left: 6px; }
.big { flex-direction: column; justify-content: flex-start; padding-top: 2px; width: 42px; text-align: center; color: #333; }
.big svg { margin-bottom: 1px; height: 34px; }
.big > .caret { margin-top: 6px; }
.big span { line-height: 15px; }
.big span .caret { display: inline-block; margin-left: 4px; vertical-align: 2px; }
.big.off { color: #a0a0a0; width: 59px; }
.paste { width: 54px; }
.mini { display: grid; grid-template-columns: 16px 16px; align-items: center; justify-items: center; grid-template-rows: 21px 24px 22px; }
.cut { grid-area: 1 / 1; }
.copy { grid-area: 2 / 1; }
.mini .caret { grid-area: 2 / 2; }
.brush { grid-area: 3 / 1; }
.rows { flex-direction: column; display: flex; }
.row { display: flex; align-items: center; height: 34px; color: #a0a0a0; }
.row:first-child { height: 36px; }
.row:last-child { height: 28px; }
.b22 { width: 22px; height: 22px; font-size: 13px; flex: none; }
.b24 { width: 24px; flex: none; }
.b26 { width: 26px; flex: none; }
.b22 strong { font-size: 15px; font-weight: 600; }
.b22 em { font-family: "Liberation Serif", serif; font-weight: 700; }
.b22 u { font-weight: 600; }
.c12 { width: 12px; display: flex; justify-content: center; flex: none; }
.c8 { width: 8px; display: flex; justify-content: center; }
.bar { width: 9px; height: 22px; flex: none; background: linear-gradient(#d4d4d4, #d4d4d4) 50% 0 / 1px 100% no-repeat; }
.bar.tall { height: 56px; margin-top: 6px; }
.combo { position: relative; height: 23px; border: 1px solid #c6c6c6; background: #fdfdfd; color: #888; }
.combo select { appearance: none; width: 100%; height: 100%; padding-left: 3px; }
.combo::after { content: ""; position: absolute; right: 4px; top: 9px; border: 3px solid transparent; border-top-color: #bbb; border-bottom: 0; }
.face { width: 158px; margin-left: 1px; }
.size { width: 40px; border-left: 0; margin-right: 2px; }
.combo.fill { flex: 1; }
.grow, .shrink { font-weight: 600; font-size: 15px; }
.shrink { font-size: 13px; }
.grow svg, .shrink svg { align-self: flex-start; margin-top: 3px; }
.ruby { flex-direction: column; font-size: 8px; line-height: 9px; }
.align .rows:first-child { width: 120px; }
.text { gap: 3px; color: #999; }
.wide { padding-left: 2px; width: 157px; }
.end { margin-left: auto; margin-right: 3px; }
.pct { font-size: 15px; font-weight: 500; }
.comma { width: 16px; font-size: 15px; font-weight: 700; }
.number .bar { width: 12px; }
.dec { flex-direction: column; align-items: flex-end; width: 23px; padding-right: 3px; font: 8px/10px "Liberation Sans", sans-serif; color: #888; }
.list { display: flex; flex-direction: column; width: 96px; gap: 7px; padding-top: 2px; }
.list .text { justify-content: flex-start; height: 16px; width: 94px; }
.list .on { color: #333; }
.list .far { margin-left: auto; }
.find { width: 42px; }
.collapse { margin-left: auto; align-self: flex-end; width: 20px; height: 10px; margin-right: 5px; }

/* Formula bar */
.formula { display: flex; flex: none; height: 51px; padding: 10px 5px; }
.namebox, .fx, .entry { display: flex; align-items: center; background: #fdfdfd; border: 1px solid #c6c6c6; }
.namebox { width: 102px; padding: 0 6px; font-size: 14px; }
.namebox input { flex: 1; min-width: 0; }
.namebox .caret { border-width: 4px 4px 0; }
.dots { width: 2px; height: 10px; flex: none; background: repeating-linear-gradient(#aaa 0 2px, transparent 2px 4px); }
.formula .dots { margin: 10px 14px; }
.fx { width: 110px; margin-right: 3px; }
.fx button { width: 36px; }
.fn { color: #666; font: italic 700 16px/20px "Liberation Serif", serif; }
.fn sub { font-size: 12px; line-height: 12px; align-self: flex-end; }
.entry { flex: 1; padding-right: 4px; }
.entry input { flex: 1; }

/* Worksheet */
.sheet { position: relative; flex: 1; min-height: 0; display: flex; }
.cells { flex: 1; min-width: 0; overflow: hidden; border-right: 1px solid #999; border-bottom: 1px solid #999; background: linear-gradient(#e6e6e6 25px, #fff 25px); }
table { width: 100%; table-layout: fixed; border-collapse: separate; border-spacing: 0; color: #000; font: 300 15px/20px "Noto Sans CJK JP", sans-serif; font-feature-settings: normal; }
.rh { width: 29px; }
.data { width: 88px; }
.std { width: 72px; }
th, td { height: 25px; padding: 0 2px 2px; white-space: nowrap; overflow: hidden; }
th { font-weight: 300; }
thead th { border-bottom: 1px solid #999; background: linear-gradient(#d8d8d8, #999) 100% 0 / 1px 100% no-repeat #e6e6e6; }
thead th:last-child { background: #e6e6e6; }
thead .corner { background: linear-gradient(135deg, transparent 50%, #b4b4b4 50%) 8px 4px / 17px 17px no-repeat #e6e6e6; border-right: 1px solid #999; }
tbody th { padding: 0 0 2px; background: #e6e6e6; border-right: 1px solid #999; border-bottom: 1px solid #bdbdbd; }
td { border-right: 1px solid #d4d4d4; border-bottom: 1px solid #d4d4d4; }
.open { border-right-color: transparent; }
.rest { border-right: 0; background: repeating-linear-gradient(90deg, transparent 0 71px, #d4d4d4 71px 72px); }
.caption td:not(.rest) { border-bottom-color: #000; }
.heads th, .heads td { height: 27px; }
.heads td:not(.rest) { background: #ffd966 padding-box; border-right-color: #000; border-bottom: 3px double #000; text-align: center; }
.rec td:not(.rest) { border-color: #000; text-align: right; }
.rec td:nth-child(2) { text-align: left !important; }
.vscroll { width: 21px; display: flex; flex-direction: column; padding: 2px 4px 0 3px; }
.vscroll button, .hscroll button { width: 15px; height: 15px; flex: none; background: #fff; border: 1px solid #aaa; }
.vthumb { flex: 372; background: #fff; border: 1px solid #aaa; border-top: 0; }
.vscroll .gap { flex: 66; background: #d9d9d9; }
.up, .down { border: 4px solid transparent; }
.up { border-top: 0; border-bottom-color: #666; }
.down { border-bottom: 0; border-top-color: #666; }
.left, .right { border: 4px solid transparent; }
.left { border-left: 0; border-right-color: #666; }
.right { border-right: 0; border-left-color: #666; }

/* Map picture placed on the worksheet */
.stem { position: absolute; left: 783px; top: 25px; width: 1px; height: 24px; background: #999; }
.map { position: absolute; left: 539px; top: 48px; width: 489px; height: 355px; margin: 0; border: 1px solid #999; color: #222; }
.art { width: 100%; height: 100%; }
.legend { position: absolute; left: 14px; bottom: 14px; width: 132px; height: 132px; padding: 8px 5px; background: rgba(255, 255, 255, .9); font-size: 10px; font-family: "Noto Sans CJK JP", sans-serif; font-feature-settings: normal; }
.legend h2 { margin: 0 0 3px; padding-bottom: 4px; border-bottom: 1px solid #b5b5b5; font-size: 11px; font-weight: 400; }
.legend ul { margin: 0; padding: 0; list-style: none; }
.legend li { display: flex; align-items: center; gap: 4px; height: 19px; white-space: nowrap; font-weight: 500; }
.legend i { width: 11px; height: 11px; border: 1px solid #555; }
.blue { background: #1c67b3; }
.orange { background: #f58a17; }
.purple { background: #7a1fa8; }
.yellow { background: #fdc41f; }
.bing { position: absolute; left: 25px; bottom: 9px; font-size: 10px; line-height: 14px; color: #666; }
figcaption { position: absolute; right: 6px; bottom: 3px; font: 500 6px/8px "Noto Sans CJK JP", sans-serif; color: #000; }
.handles { position: absolute; inset: -6px; display: grid; grid-template-columns: 1fr 1fr 1fr; justify-content: space-between; align-content: space-between; }
.handles i { width: 11px; height: 11px; border: 2px solid #999; border-radius: 50%; background: #fff; }
.handles i:nth-child(3n + 2) { justify-self: center; }
.handles i:nth-child(3n) { justify-self: end; }
.handles .none { visibility: hidden; }
.frame { position: absolute; left: 520px; top: 33px; width: 525px; height: 385px; border: 7px solid #ff2600; border-radius: 3px; }
.badge { position: absolute; left: 540px; top: -21px; width: 42px; height: 42px; border-radius: 50%; background: #fff; box-shadow: 0 2px 4px rgba(0, 0, 0, .45); color: #ff2600; font: 900 38px/40px "Noto Sans CJK JP", sans-serif; text-align: center; }

/* Sheet tabs */
.sheetbar { display: flex; align-items: center; flex: none; height: 27px; padding-right: 21px; }
.nav { display: flex; width: 100px; padding-left: 14px; }
.nav button { width: 29px; }
.nav i { opacity: .35; }
.sheettab { align-self: flex-start; z-index: 1; width: 73px; height: 25px; margin-top: -1px; padding-top: 3px; background: #fff; border-bottom: 2px solid #217346; color: #217346; font-size: 13px; }
.add { margin-left: 32px; }
.sheetbar .dots { margin: 0 15px 0 auto; }
.hscroll { display: flex; width: 509px; background: #d9d9d9; }
.hthumb { flex: 449; background: #fff; border: 1px solid #aaa; border-left: 0; }
.hscroll .gap { flex: 30; }

/* Status bar */
.status { display: flex; align-items: center; flex: none; height: 22px; padding: 0 7px; background: #f1f1f1; border-top: 1px solid #c6c6c6; }
.macro { margin-left: 20px; }
.views { display: flex; margin-left: auto; align-self: stretch; }
.views button { width: 38px; }
.views .sel { background: #c8c8c8; }
.zoom { width: 8px; }
.views + .zoom { margin-left: 4px; }
.status input { appearance: none; width: 100px; height: 12px; margin: 0 3px; background: linear-gradient(#999, #999) 0 5px / 100% 1px no-repeat; }
.status input::-webkit-slider-thumb { appearance: none; width: 4px; height: 12px; background: #666; }
.status output { margin-left: 15px; width: 36px; text-align: right; font-size: 13px; }
```
